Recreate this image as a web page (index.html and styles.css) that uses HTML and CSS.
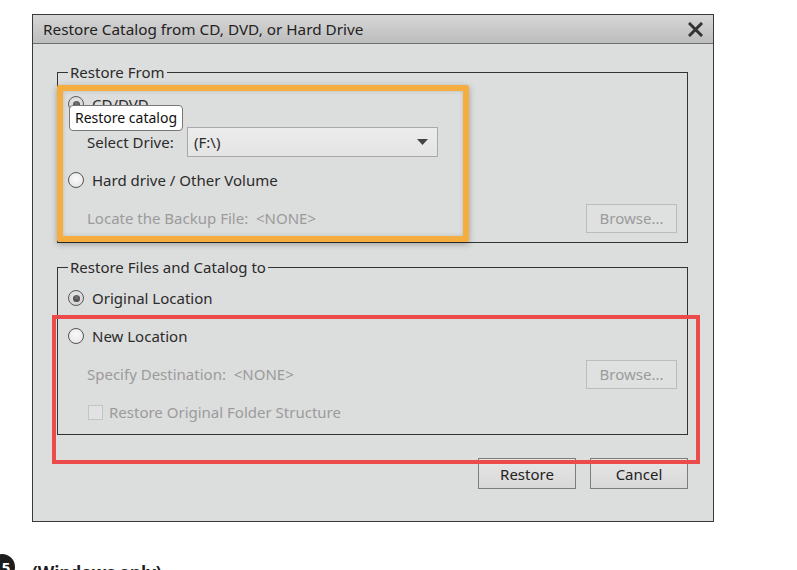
FILE: index.html
```html
<!DOCTYPE html>
<html>
<head>
<meta charset="utf-8">
<link rel="stylesheet" href="styles.css">
</head>
<body>
<div class="page">
  <div class="dialog">
    <div class="titlebar">
      <span class="title">Restore Catalog from CD, DVD, or Hard Drive</span>
      <svg class="close" width="15" height="15" viewBox="0 0 15 15"><path d="M2 2 L13 13 M13 2 L2 13" stroke="#333" stroke-width="3" stroke-linecap="square"/></svg>
    </div>
    <div class="dlg-body">
      <fieldset class="group g1">
        <legend>Restore From</legend>
        <div class="row"><span class="radio checked"></span><span class="lbl">CD/DVD</span></div>
        <div class="row indent"><span class="field-label">Select Drive:</span>
          <div class="select"><span>(F:\)</span><svg width="11" height="6" viewBox="0 0 11 6"><path d="M0 0 H11 L5.5 6 Z" fill="#444"/></svg></div>
        </div>
        <div class="row"><span class="radio"></span><span class="lbl">Hard drive / Other Volume</span></div>
        <div class="row indent disabled"><span>Locate the Backup File:&nbsp; &lt;NONE&gt;</span><span class="btn browse">Browse...</span></div>
      </fieldset>
      <fieldset class="group g2">
        <legend>Restore Files and Catalog to</legend>
        <div class="row"><span class="radio checked"></span><span class="lbl">Original Location</span></div>
        <div class="row"><span class="radio"></span><span class="lbl">New Location</span></div>
        <div class="row indent disabled"><span>Specify Destination:&nbsp; &lt;NONE&gt;</span><span class="btn browse">Browse...</span></div>
        <div class="row indent disabled"><span class="checkbox"></span><span class="cb-lbl">Restore Original Folder Structure</span></div>
      </fieldset>
      <div class="actions">
        <span class="btn action">Restore</span>
        <span class="btn action">Cancel</span>
      </div>
    </div>
  </div>
  <div class="step"><span class="num">5</span><span class="step-text">(Windows only)</span></div>
  <div class="tooltip">Restore catalog</div>
  <div class="hl hl-orange"></div>
  <div class="hl hl-red"></div>
</div>
</body>
</html>
```
FILE: styles.css
```css
* { box-sizing: border-box; }
html, body { margin: 0; padding: 0; background: #fff; }
body { font-family: "Noto Sans", "Open Sans", sans-serif; font-size: 15px; color: #2b2b2b; }
.page { position: relative; width: 797px; height: 570px; overflow: hidden; padding-top: 14px; }
.dialog {
  margin-left: 32px; width: 682px; height: 508px;
  border: 1px solid #3a3a3a; background: #dcdddd;
  display: flex; flex-direction: column;
}
.titlebar {
  height: 29px; border-bottom: 1px solid #6e6e6e;
  background: linear-gradient(#d6d6d6, #bdbdbd);
  display: flex; align-items: center; justify-content: space-between;
  padding: 0 10px 0 10px;
}
.title { font-size: 15.3px; color: #222; }
.close { display: block; }
.dlg-body { padding: 20px 25px 0 24px; display: flex; flex-direction: column; }
.group { margin: 0; border: 1px solid #333; padding: 0 10px; min-width: 0; }
.group legend { padding: 0 2px; margin-left: 0; line-height: 16px; font-size: 15px; color: #2b2b2b; }
.g1 { padding-top: 5px; padding-bottom: 5px; }
.g2 { margin-top: 16px; padding-top: 4px; padding-bottom: 3px; }
.row { height: 38px; display: flex; align-items: center; }
.row.indent { padding-left: 19px; }
.lbl { margin-left: 8px; }
.radio {
  width: 16px; height: 16px; border-radius: 50%; flex: none;
  border: 1px solid #555; background: radial-gradient(circle at 50% 40%, #fafafa, #e2e2e2);
  display: flex; align-items: center; justify-content: center;
}
.radio.checked { border-color: #5a5a5a; background: radial-gradient(circle at 50% 40%, #e8e8e8, #cfcfcf); }
.radio.checked::after { content: ""; width: 7px; height: 7px; border-radius: 50%; background: radial-gradient(circle at 50% 35%, #777, #333); }
.field-label { width: 100px; flex: none; }
.select {
  width: 251px; height: 30px; border: 1px solid #a9a9a9; background: linear-gradient(#ececec, #e4e4e4);
  display: flex; align-items: center; justify-content: space-between; padding: 0 9px 0 6px;
}
.select svg { display: block; }
.disabled { color: #9b9b9b; }
.btn { display: flex; align-items: center; justify-content: center; }
.browse {
  margin-left: auto; width: 91px; height: 29px; border: 1px solid #bcbcbc;
  background: #dfe0e0; color: #9b9b9b;
}
.checkbox { width: 15px; height: 15px; border: 1px solid #c4c4c4; background: #e2e2e2; flex: none; margin-left: 1px; }
.cb-lbl { margin-left: 6px; }
.actions { display: flex; justify-content: flex-end; gap: 14px; margin-top: 23px; }
.action {
  width: 98px; height: 31px; border: 1px solid #7d7d7d;
  background: linear-gradient(#e6e6e6, #d8d8d8); color: #222;
}
.step { display: flex; align-items: center; margin-top: 28px; }
.num {
  width: 26px; height: 26px; border-radius: 50%; background: #1d1d1d; color: #fff;
  margin-left: -11px; display: flex; align-items: center; justify-content: center;
  font-family: "Open Sans", sans-serif; font-weight: 700; font-size: 15px; padding-left: 8px;
}
.step-text { margin-left: 17px; font-family: "Open Sans", sans-serif; font-weight: 700; font-size: 17px; color: #1d1d1d; margin-top: 11px; }
.tooltip {
  position: absolute; left: 69px; top: 105px; height: 26px;
  background: #fff; border: 1px solid #777; border-radius: 4px;
  font-size: 14px; color: #111; padding: 0 5px; line-height: 24px;
}
.hl { position: absolute; pointer-events: none; }
.hl-orange {
  left: 57px; top: 85px; width: 412px; height: 157px;
  border: 6px solid #f4ad3e; border-radius: 2px;
  box-shadow: 0 2px 6px rgba(0,0,0,0.3), inset 0 0 4px rgba(0,0,0,0.15);
}
.hl-red {
  left: 52px; top: 315px; width: 648px; height: 149px;
  border: 4px solid #ec4b4b;
}
```
